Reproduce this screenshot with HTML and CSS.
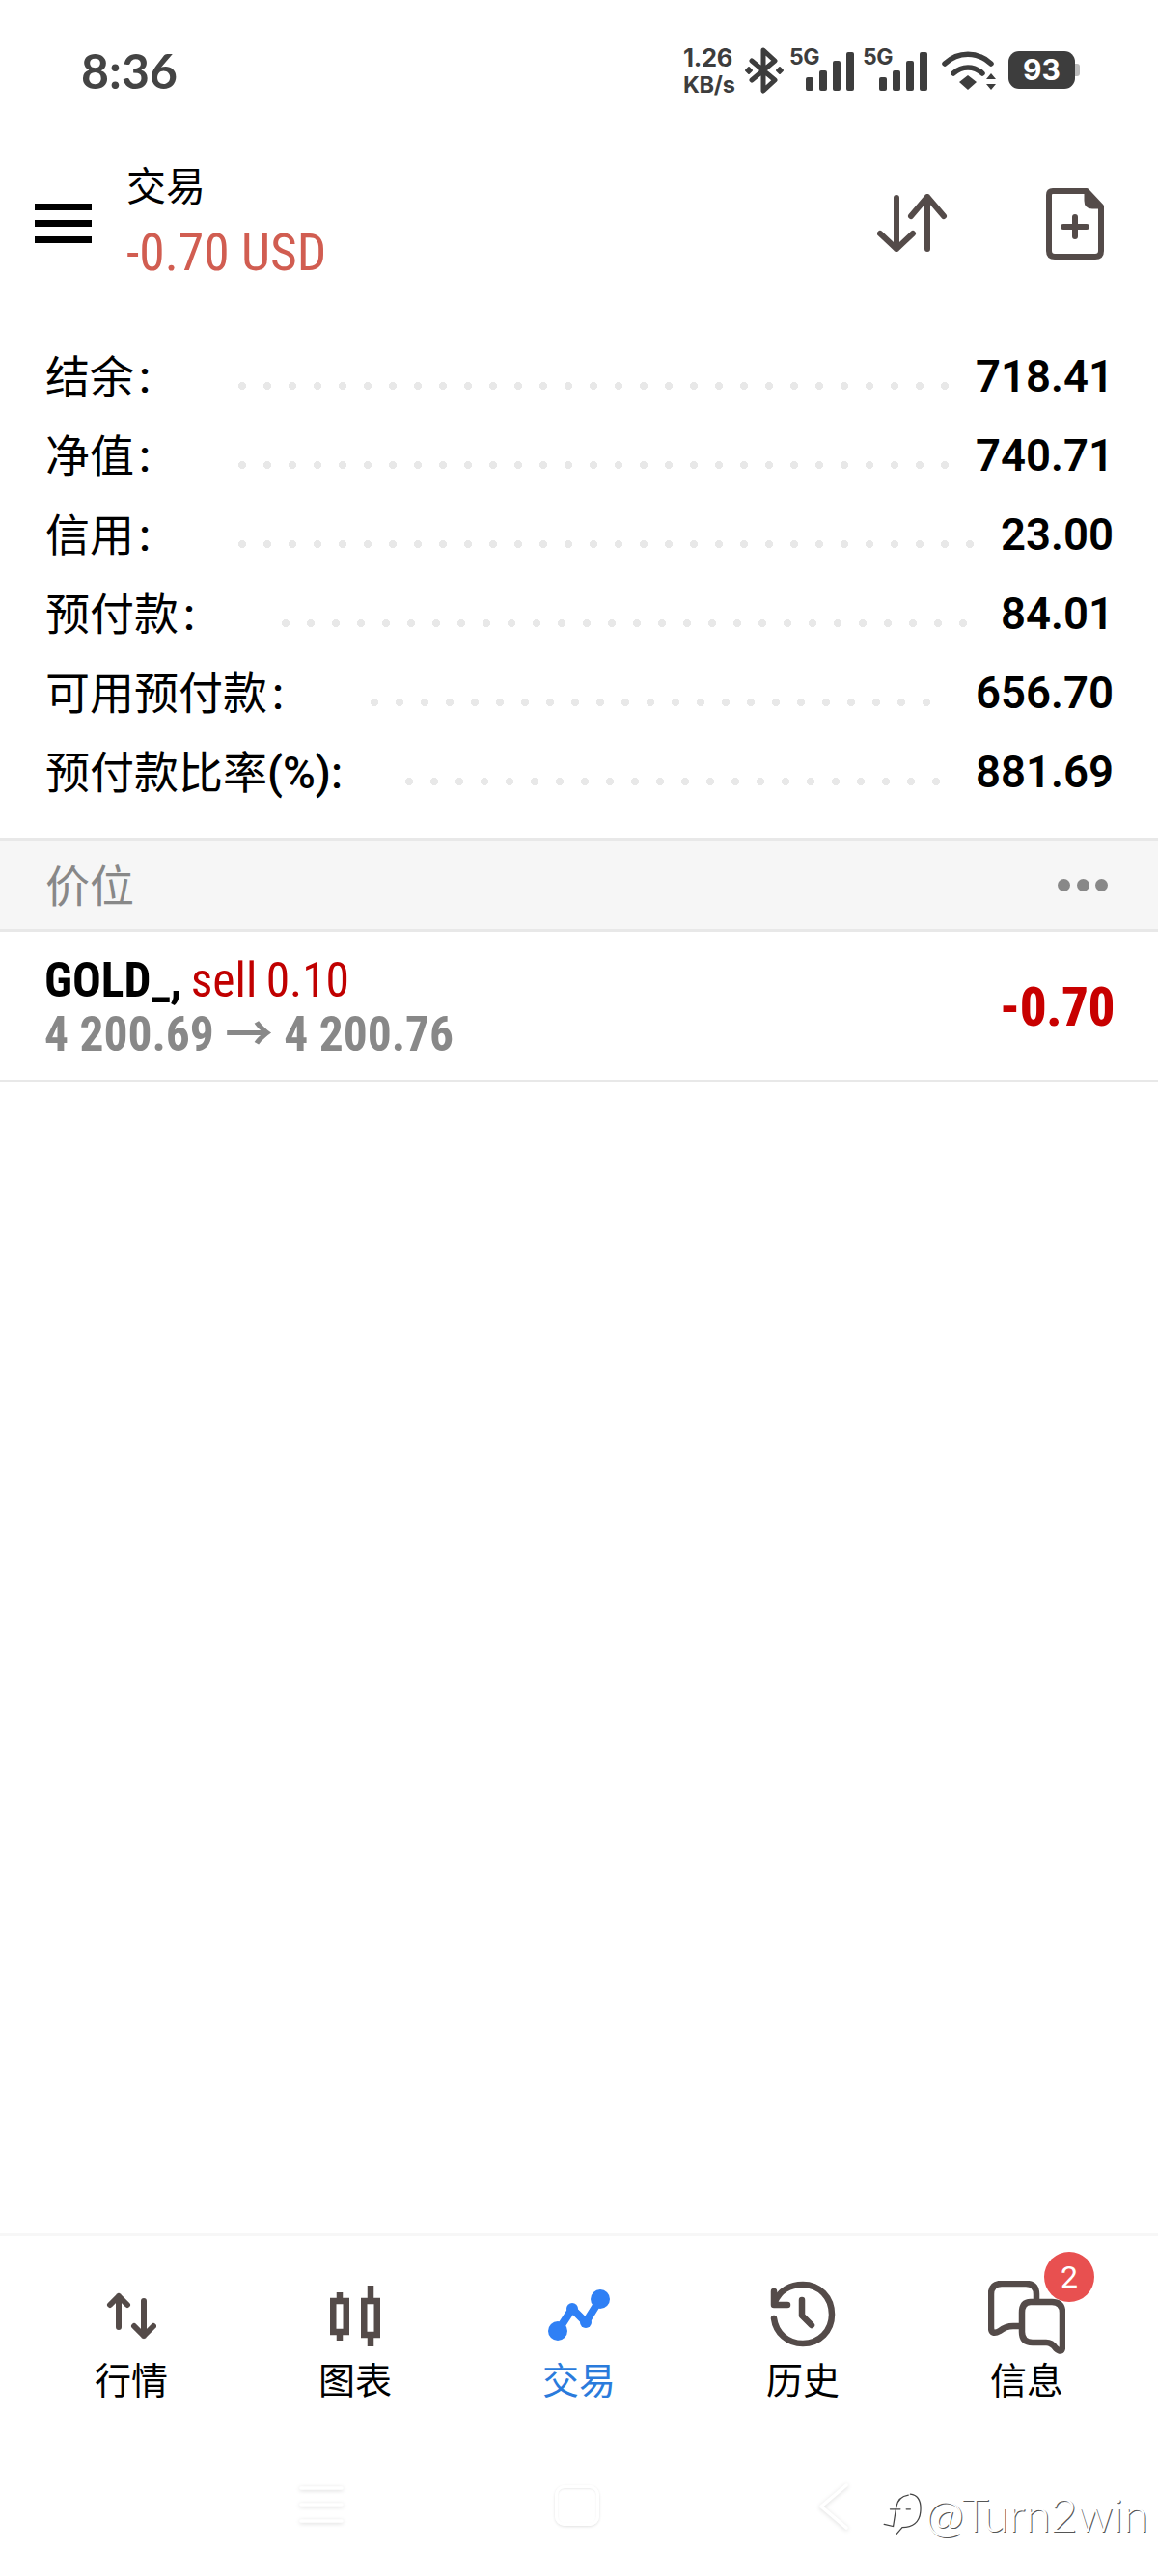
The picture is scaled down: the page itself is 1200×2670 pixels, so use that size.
FILE: index.html
```html
<!DOCTYPE html>
<html lang="en">
<head>
    <meta charset="UTF-8">
    <meta name="viewport" content="width=device-width, initial-scale=1.0">
    <title>交易</title>
    <link rel="stylesheet" href="styles.css">
</head>
<body>
    <div class="page">
        <div class="status-bar">
            <span class="clock">8:36</span>
            <div class="status-icons">
                <div class="speed"><span class="speed-num">1.26</span><span>KB/s</span></div>
                <svg class="ic-bt" width="44" height="48" viewBox="0 0 44 48" fill="none" stroke="#3d3d3d" stroke-width="5" stroke-linejoin="round" stroke-linecap="round">
                    <path d="M9 14L33 34L21 45V3L33 14L9 34"/>
                    <path d="M3 24l3-3 3 3-3 3zM35 24l3-3 3 3-3 3z" fill="#3d3d3d" stroke-width="2"/>
                </svg>
                <svg class="ic-sig" width="68" height="52" viewBox="0 -6 68 52">
                    <text x="0" y="18" class="sig-text">5G</text>
                    <rect x="17" y="31" width="8" height="14" rx="2"/>
                    <rect x="31" y="24" width="8" height="21" rx="2"/>
                    <rect x="45" y="14" width="8" height="31" rx="2"/>
                    <rect x="59" y="5" width="8" height="40" rx="2"/>
                </svg>
                <svg class="ic-sig" width="68" height="52" viewBox="0 -6 68 52">
                    <text x="0" y="18" class="sig-text">5G</text>
                    <rect x="17" y="31" width="8" height="14" rx="2"/>
                    <rect x="31" y="24" width="8" height="21" rx="2"/>
                    <rect x="45" y="14" width="8" height="31" rx="2"/>
                    <rect x="59" y="5" width="8" height="40" rx="2"/>
                </svg>
                <svg class="ic-wifi" width="56" height="42" viewBox="0 0 56 42" fill="none" stroke="#3d3d3d" stroke-width="5.5" stroke-linecap="round">
                    <path d="M3 13C17 0 37 0 51 13"/>
                    <path d="M12 23C21 15 33 15 42 23"/>
                    <path d="M18 32l9-7 9 7-9 8z" fill="#3d3d3d" stroke="none"/>
                    <path d="M46 29l5-6 5 6zM46 34l5 6 5-6z" fill="#3d3d3d" stroke="none"/>
                </svg>
                <div class="battery"><span>93</span></div>
                <div class="battery-nub"></div>
            </div>
        </div>

        <div class="top-bar">
            <div class="menu-btn"><i></i><i></i><i></i></div>
            <div class="title-box">
                <div class="title">交易</div>
                <div class="profit">-0.70 USD</div>
            </div>
            <svg class="ic-sort" width="74" height="60" viewBox="0 0 74 60" fill="none" stroke="#544b49" stroke-width="6" stroke-linecap="round" stroke-linejoin="round">
                <path d="M20 4V57M3 41L20 57L37 41"/>
                <path d="M52 57V3M35 23L52 3L69 23"/>
            </svg>
            <svg class="ic-file" width="60" height="74" viewBox="0 0 60 74" fill="none" stroke="#544b49" stroke-width="6" stroke-linejoin="round" stroke-linecap="round">
                <path d="M7 3H42L57 19V65Q57 71 51 71H9Q3 71 3 65V7Q3 3 7 3Z"/>
                <path d="M41 3V13Q41 20 48 20H57" fill="#544b49" stroke-width="3"/>
                <path d="M30 30V50M18 40H42"/>
            </svg>
        </div>

        <div class="summary">
            <div class="row"><span class="label">结余<span class="colon">:</span></span><span class="dots dots-29"></span><span class="value">718.41</span></div>
            <div class="row"><span class="label">净值<span class="colon">:</span></span><span class="dots dots-29"></span><span class="value">740.71</span></div>
            <div class="row"><span class="label">信用<span class="colon">:</span></span><span class="dots dots-30"></span><span class="value">23.00</span></div>
            <div class="row"><span class="label">预付款<span class="colon">:</span></span><span class="dots dots-28"></span><span class="value">84.01</span></div>
            <div class="row"><span class="label">可用预付款<span class="colon">:</span></span><span class="dots dots-23"></span><span class="value">656.70</span></div>
            <div class="row"><span class="label">预付款比率<span class="latin">(%):</span></span><span class="dots dots-22"></span><span class="value">881.69</span></div>
        </div>

        <div class="section-head">
            <span class="section-title">价位</span>
            <div class="more"><i></i><i></i><i></i></div>
        </div>

        <div class="position">
            <div class="pos-left">
                <div class="pos-line1"><b>GOLD_,</b> <span class="sell">sell 0.10</span></div>
                <div class="pos-line2">4 200.69 → 4 200.76</div>
            </div>
            <div class="pos-profit">-0.70</div>
        </div>

        <div class="spacer"></div>

        <div class="tabs">
            <div class="tab">
                <svg width="52" height="70" viewBox="0 0 52 70" fill="none" stroke="#544b49" stroke-width="6" stroke-linecap="round" stroke-linejoin="round">
                    <path d="M13 48V16M4 25L13 16L22 25"/>
                    <path d="M39 21V57M29 47L39 57L49 47"/>
                </svg>
                <span>行情</span>
            </div>
            <div class="tab">
                <svg width="52" height="70" viewBox="0 0 52 70" fill="none" stroke="#544b49" stroke-width="6.500">
                    <path d="M10 12V21M10 53V62M42 5V21M42 56V68"/>
                    <rect x="3.250" y="21" width="13.500" height="32"/>
                    <rect x="35.250" y="21" width="13.500" height="35"/>
                </svg>
                <span>图表</span>
            </div>
            <div class="tab tab-active">
                <svg width="65" height="70" viewBox="0 0 65 70" fill="none" stroke="#2f80f5" stroke-width="8" stroke-linecap="round" stroke-linejoin="round">
                    <path d="M10 52L25 29L39 43L54 19"/>
                    <circle cx="10" cy="52" r="10" fill="#2f80f5" stroke="none"/>
                    <circle cx="25" cy="29" r="6" fill="#2f80f5" stroke="none"/>
                    <circle cx="39" cy="43" r="6" fill="#2f80f5" stroke="none"/>
                    <circle cx="54" cy="19" r="10" fill="#2f80f5" stroke="none"/>
                </svg>
                <span>交易</span>
            </div>
            <div class="tab">
                <svg width="68" height="70" viewBox="0 0 68 70" fill="none" stroke="#544b49" stroke-width="6.500" stroke-linecap="round" stroke-linejoin="round">
                    <path d="M5 22C10 10 21 4 34 4C51 4 64 17 64 35C64 52 51 65 34 65C18 65 6 54 4 39"/>
                    <path d="M4 11V25H18"/>
                    <path d="M33 20V36L43 46"/>
                </svg>
                <span>历史</span>
            </div>
            <div class="tab">
                <div class="msg-icon">
                    <svg width="80" height="76" viewBox="0 0 80 76" fill="none" stroke="#544b49" stroke-width="6.500" stroke-linejoin="round">
                        <path d="M50 22V14Q50 3 39 3H14Q3 3 3 14V48Q3 57 12 52Q18 47 26 47H34"/>
                        <path d="M44 22H66Q77 22 77 33V68Q77 76 70 70Q66 64 60 64H46Q35 64 35 53V33Q35 22 44 22Z"/>
                    </svg>
                    <div class="badge">2</div>
                </div>
                <span>信息</span>
            </div>
        </div>

        <div class="nav-bar">
            <svg class="nav-lines" width="46" height="44" viewBox="0 0 46 44" fill="none" stroke="#fff" stroke-width="3.500" stroke-linecap="round">
                <path d="M2 3H44M2 20H44M2 37H44"/>
            </svg>
            <div class="nav-square"></div>
            <svg class="nav-back" width="34" height="50" viewBox="0 0 34 50" fill="none" stroke="#fff" stroke-width="3.500" stroke-linecap="round" stroke-linejoin="round">
                <path d="M30 3L4 25L30 47"/>
            </svg>
            <div class="watermark">
                <svg width="42" height="46" viewBox="0 0 40 44" fill="none" stroke="#444" stroke-width="1.200" stroke-linecap="round">
                    <path d="M28 2C36 3 39 10 38 20C37 30 30 35 20 35L14 42"/>
                    <path d="M26 3C19 4 15 9 14 15L11 34L2 32"/>
                    <path d="M8 17H18M24 17H28"/>
                </svg>
                <span>@Turn2win</span>
            </div>
        </div>
    </div>
</body>
</html>
```

FILE: styles.css
```css
* {
    box-sizing: border-box;
}
body {
    margin: 0;
    background: #fff;
    font-family: Roboto, "Noto Sans CJK SC", sans-serif;
    color: #000;
}
.page {
    height: 2670px;
    display: flex;
    flex-direction: column;
    overflow: hidden;
}

/* status bar */
.status-bar {
    height: 146px;
    flex: none;
    display: flex;
    justify-content: space-between;
    padding: 48px 81px 0 84px;
}
.clock {
    font-family: Lato, sans-serif;
    font-size: 50px;
    font-weight: 700;
    line-height: 50px;
    color: #444;
}
.status-icons {
    display: flex;
    align-items: flex-start;
    height: 48px;
}
.speed {
    width: 62px;
    display: flex;
    flex-direction: column;
    font-family: Inter, sans-serif;
    font-size: 23.500px;
    font-weight: 700;
    line-height: 28px;
    color: #3d3d3d;
    margin-top: -2px;
    letter-spacing: -0.3px;
}
.speed-num {
    font-size: 25.500px;
}
.ic-bt {
    margin: 1px 4px 0 0;
}
.ic-sig {
    fill: #3d3d3d;
    margin: -5px 8px 0 0;
}
.sig-text {
    font-family: Inter, sans-serif;
    font-size: 23px;
    font-weight: 700;
    letter-spacing: -0.5px;
}
.ic-wifi {
    margin: 5px 0 0 6px;
}
.battery {
    width: 69px;
    height: 39px;
    margin: 5px 0 0 13px;
    background: #3d3d3d;
    border-radius: 11px;
    color: #fff;
    font-family: Inter, sans-serif;
    font-size: 30px;
    font-weight: 700;
    line-height: 39px;
    text-align: center;
}
.battery-nub {
    width: 5px;
    height: 13px;
    margin-top: 18px;
    background: #bbb;
    border-radius: 0 3px 3px 0;
}

/* title row */
.top-bar {
    height: 143px;
    flex: none;
    display: flex;
    align-items: flex-start;
    padding-left: 36px;
}
.menu-btn {
    width: 59px;
    margin-top: 65px;
    display: flex;
    flex-direction: column;
    gap: 10px;
}
.menu-btn i {
    height: 7px;
    background: #000;
}
.title-box {
    margin-left: 36px;
    flex: 1;
}
.title {
    font-size: 41px;
    line-height: 50px;
    margin-top: 23px;
}
.profit {
    font-stretch: condensed;
    font-size: 53.500px;
    line-height: 66px;
    margin-top: 10px;
    color: #d15d51;
}
.ic-sort {
    margin: 55px 101px 0 0;
}
.ic-file {
    margin: 49px 56px 0 0;
}

/* account rows */
.summary {
    flex: none;
    height: 580px;
    padding: 60px 46px 0 47px;
}
.row {
    height: 82px;
    display: flex;
    align-items: center;
}
.label {
    font-size: 46px;
    white-space: nowrap;
    margin-top: -6px;
}
.colon {
    margin-left: 5px;
    font-weight: 500;
}
.latin {
    font-weight: 500;
}
.dots {
    height: 8px;
    margin-top: 20px;
    background: radial-gradient(circle at 4px 4px, #e8e8e8 3.800px, transparent 4.300px) left top / 26px 8px repeat-x;
}
.dots-29 {
    width: 736px;
    margin-left: 91px;
}
.dots-30 {
    width: 762px;
    margin-left: 91px;
}
.dots-28 {
    width: 710px;
    margin-left: 90px;
}
.dots-23 {
    width: 580px;
    margin-left: 90px;
}
.dots-22 {
    width: 554px;
    margin-left: 65px;
}
.value {
    margin-left: auto;
    font-size: 45.500px;
    font-weight: 600;
}

/* positions */
.section-head {
    flex: none;
    height: 97px;
    background: #f6f6f6;
    border-top: 3px solid #e8e8e8;
    border-bottom: 3px solid #e8e8e8;
    display: flex;
    align-items: center;
    justify-content: space-between;
    padding: 0 52px 0 47px;
    font-size: 46px;
    color: #888;
}
.section-title {
    margin-top: -5px;
}
.more {
    display: flex;
    gap: 6.500px;
}
.more i {
    width: 13px;
    height: 13px;
    border-radius: 50%;
    background: #888;
}
.position {
    flex: none;
    height: 156px;
    border-bottom: 3px solid #e8e8e8;
    display: flex;
    justify-content: space-between;
    align-items: center;
    padding: 2px 45px 0 46px;
    font-stretch: condensed;
}
.pos-line1 {
    font-size: 49.500px;
    line-height: 56px;
    word-spacing: -2px;
}
.sell {
    color: #c00000;
}
.pos-line2 {
    font-size: 49.500px;
    line-height: 56px;
    font-weight: 700;
    color: #888;
}
.pos-profit {
    font-size: 55px;
    font-weight: 800;
    letter-spacing: -0.5px;
    color: #c80000;
}
.spacer {
    flex: 1;
}

/* bottom tabs */
.tabs {
    flex: none;
    height: 220px;
    padding: 0 20px;
    display: flex;
    border-top: 3px solid #f7f7f7;
}
.tab {
    flex: 1;
    display: flex;
    flex-direction: column;
    align-items: center;
    padding-top: 46px;
    font-size: 38px;
    line-height: 50px;
}
.tab svg {
    display: block;
    height: 70px;
}
.tab span {
    margin-top: 9px;
}
.tab-active {
    color: #2a7bdc;
}
.msg-icon {
    position: relative;
    height: 70px;
}
.msg-icon svg {
    height: 76px;
}
.badge {
    position: absolute;
    top: -30px;
    left: 58px;
    width: 52px;
    height: 52px;
    border-radius: 50%;
    background: #e85050;
    color: #fff;
    font-size: 32px;
    line-height: 52px;
    text-align: center;
}

/* system nav */
.nav-bar {
    flex: none;
    height: 135px;
    display: flex;
    align-items: flex-start;
    padding: 41px 0 0 310px;
    position: relative;
}
.nav-lines,
.nav-back {
    filter: drop-shadow(0 1px 2px rgba(0, 0, 0, 0.14));
}
.nav-square {
    width: 46px;
    height: 42px;
    margin: 0 0 0 219px;
    border: 3px solid #fff;
    border-radius: 10px;
    box-shadow: 0 1px 3px rgba(0, 0, 0, 0.12), inset 0 1px 2px rgba(0, 0, 0, 0.08);
}
.nav-back {
    margin: -3px 0 0 226px;
}
.watermark {
    position: absolute;
    left: 914px;
    top: 48px;
    display: flex;
    align-items: center;
    gap: 3px;
}
.watermark span {
    font-family: Lato, sans-serif;
    font-size: 48px;
    font-weight: 300;
    line-height: 44px;
    color: #fff;
    text-shadow: 1px 1px 0 #555;
}
```
